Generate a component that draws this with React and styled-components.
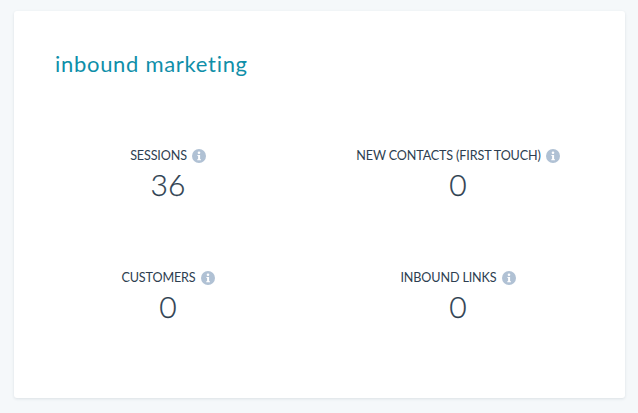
import styled, { createGlobalStyle } from 'styled-components'

const GlobalStyle = createGlobalStyle`
  html, body {
    margin: 0;
    padding: 0;
    background: #f5f8fa;
  }
`

const Page = styled.div`
  width: 638px;
  height: 413px;
  box-sizing: border-box;
  padding: 11px 13px 15px 14px;
  overflow: hidden;
`

const Card = styled.section`
  height: 100%;
  box-sizing: border-box;
  padding: 39px 10px 0 9px;
  background: #fff;
  border-radius: 3px;
  box-shadow: 0 1px 3px rgba(45, 62, 80, 0.12);
`

const Title = styled.h2`
  margin: 0 0 0 32px;
  font-family: Lato, sans-serif;
  font-size: 22px;
  font-weight: 400;
  line-height: 28px;
  letter-spacing: 0.7px;
  color: #0f8fa9;
`

const Stats = styled.div`
  display: grid;
  grid-template-columns: 290px 290px;
  grid-auto-rows: 122px;
  margin-top: 70px;
`

const Stat = styled.div`
  display: flex;
  flex-direction: column;
  align-items: center;
`

const Label = styled.div`
  display: flex;
  align-items: center;
  gap: 5px;
  font-family: Lato, sans-serif;
  font-size: 12.6px;
  line-height: 16px;
  letter-spacing: -0.14px;
  color: #2d3e50;
  text-transform: uppercase;
`

const Value = styled.div`
  margin-top: 4px;
  font-family: Lato, sans-serif;
  font-size: 30px;
  font-weight: 300;
  line-height: 32px;
  color: #2d3e50;
  -webkit-text-stroke: 0.25px #2d3e50;
`

const InfoIcon = () => (
  <svg width="14" height="14" viewBox="0 0 14 14">
    <circle cx="7" cy="7" r="7" fill="#b0c1d4" />
    <circle cx="7" cy="3.7" r="1.3" fill="#fff" />
    <path d="M5.4 6h2.7v4.2h.9v1H5.2v-1h.9V7h-.7z" fill="#fff" />
  </svg>
)

const items = [
  { label: 'Sessions', value: 36 },
  { label: 'New contacts (first touch)', value: 0 },
  { label: 'Customers', value: 0 },
  { label: 'Inbound links', value: 0 },
]

const App = () => {
  return (
    <Page>
      <GlobalStyle />
      <Card>
        <Title>inbound marketing</Title>
        <Stats>
          {items.map((item) => (
            <Stat key={item.label}>
              <Label>
                {item.label}
                <InfoIcon />
              </Label>
              <Value>{item.value}</Value>
            </Stat>
          ))}
        </Stats>
      </Card>
    </Page>
  )
}

export default App
